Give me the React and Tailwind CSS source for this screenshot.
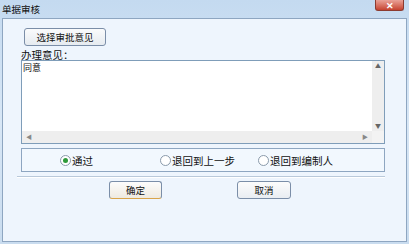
import React from "react";

const F = { fontFamily: '"Noto Sans CJK SC", "Noto Sans", sans-serif' };

function Radio({ checked, label, className }) {
  return (
    <div className={"flex items-center " + className}>
      <div className="w-[11px] h-[11px] rounded-full border border-[#8a9aab] bg-white flex items-center justify-center">
        {checked && <div className="w-[5px] h-[5px] rounded-full bg-[#2e9a3a]" />}
      </div>
      <span className="ml-[1px] text-[10.5px] leading-[13px] text-[#111]">{label}</span>
    </div>
  );
}

export default function App() {
  return (
    <div
      className="w-[409px] h-[244px] bg-gradient-to-b from-[#c4daf0] via-[#d8e7f6] to-[#c9dcef] flex flex-col"
      style={F}
    >
      <div className="h-[18px] flex items-start justify-between">
        <span className="ml-[2px] mt-[4px] text-[9.5px] leading-[11px] text-[#111]">单据审核</span>
        <div className="mr-[5px] w-[29px] h-[11px] rounded-b-[3px] border border-t-0 border-[#8c3b30] bg-gradient-to-b from-[#e9a197] to-[#c5412f] flex items-center justify-center">
          <span className="text-white text-[9px] leading-[9px] font-bold">✕</span>
        </div>
      </div>
      <div className="mx-[2px] mb-[2px] flex-1 border border-[#8ea6c1] bg-[#eef5fd] flex flex-col">
        <div className="ml-[21px] mt-[9px] w-[82px] h-[18px] rounded-[3px] border border-[#7b8ea8] bg-gradient-to-b from-[#fafbfc] to-[#e6ebf0] flex items-center justify-center text-[9.5px] text-[#111]">
          选择审批意见
        </div>
        <div className="ml-[18px] mt-[3px] text-[10.5px] leading-[11px] text-[#111]">办理意见：</div>
        <div className="ml-[18px] w-[364px] h-[84px] border border-[#7f9db9] bg-white flex flex-col">
          <div className="flex flex-1">
            <div className="flex-1 text-[9px] leading-[11px] text-[#111] pl-[1px] pt-[1px]">同意</div>
            <div className="w-[12px] bg-[#eeeeee] flex flex-col justify-between items-center py-[2px]">
              <span className="text-[6px] leading-[6px] text-[#666]">▲</span>
              <span className="text-[6px] leading-[6px] text-[#666]">▼</span>
            </div>
          </div>
          <div className="h-[12px] flex">
            <div className="flex-1 bg-[#eeeeee] flex items-center justify-between px-[4px]">
              <span className="text-[6px] leading-[6px] text-[#888]">◀</span>
              <span className="text-[6px] leading-[6px] text-[#888]">▶</span>
            </div>
            <div className="w-[12px] bg-[#f3f3f3]" />
          </div>
        </div>
        <div className="ml-[18px] mt-[4px] w-[364px] h-[24px] border border-[#8ea6c1] bg-[#f2f8fe] flex items-center">
          <Radio checked label="通过" className="ml-[38px]" />
          <Radio label="退回到上一步" className="ml-[67px]" />
          <Radio label="退回到编制人" className="ml-[23px]" />
        </div>
        <div className="ml-[14px] mt-[4px] w-[368px] h-[2px] border-t border-[#b9c9da] border-b-white border-b" />
        <div className="flex mt-[3px]">
          <div className="ml-[106px] w-[53px] h-[18px] rounded-[3px] border border-[#7b8ea8] border-b-[#d9a44a] bg-gradient-to-b from-[#fcfcfc] to-[#efeae0] flex items-center justify-center text-[9.5px] text-[#111]">
            确定
          </div>
          <div className="ml-[75px] w-[54px] h-[18px] rounded-[3px] border border-[#7b8ea8] bg-gradient-to-b from-[#fcfcfc] to-[#e9edf2] flex items-center justify-center text-[9.5px] text-[#111]">
            取消
          </div>
        </div>
      </div>
    </div>
  );
}
